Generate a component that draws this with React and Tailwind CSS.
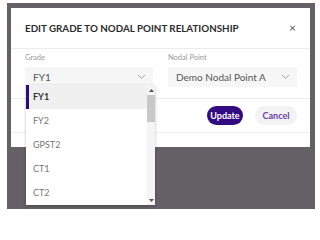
import React from "react";

const Chevron = () => (
  <svg width="9" height="6" viewBox="0 0 9 6" fill="none">
    <path d="M1 1l3.5 3.5L8 1" stroke="#9a9a9a" strokeWidth="0.9" />
  </svg>
);

export default function App() {
  const items = ["FY1", "FY2", "GPST2", "CT1", "CT2"];
  return (
    <div
      className="w-[319px] h-[214px] bg-white pt-[3px] pl-[7px] overflow-hidden"
      style={{ fontFamily: "Lato, 'Open Sans', sans-serif" }}
    >
      <div className="relative w-[308px] h-[206px] bg-[#636165] pt-[5px] pl-[4px]">
        <div className="w-[299px] h-[139px] bg-white flex flex-col">
          <div className="h-[41px] flex items-center justify-between pl-[14px] pr-[14px] border-b border-[#ececec]">
            <span className="text-[9.8px] font-bold text-[#2b2b2b]">
              EDIT GRADE TO NODAL POINT RELATIONSHIP
            </span>
            <span className="text-[12px] text-[#555] leading-none mt-[-1px]">×</span>
          </div>
          <div className="h-[50px] pl-[14px] pr-[13px] pt-[3px] flex gap-[15px] border-b border-[#ececec]">
            <div className="flex flex-col w-[128px]">
              <span className="text-[7.5px] text-[#9a9a9a] leading-[11px]">Grade</span>
              <div className="mt-[4px] h-[20px] bg-[#f6f6f6] flex items-center justify-between pl-[8px] pr-[7px]">
                <span className="text-[10px] text-[#555]">FY1</span>
                <Chevron />
              </div>
            </div>
            <div className="flex flex-col w-[129px]">
              <span className="text-[7.5px] text-[#9a9a9a] leading-[11px]">Nodal Point</span>
              <div className="mt-[4px] h-[20px] bg-[#f6f6f6] flex items-center justify-between pl-[8px] pr-[7px]">
                <span className="text-[10px] text-[#555]">Demo Nodal Point A</span>
                <Chevron />
              </div>
            </div>
          </div>
          <div className="h-[34px] flex items-start justify-end gap-[12px] pr-[13px] pt-[7px] border-b border-[#f0f0f0]">
            <button className="h-[19px] w-[36px] rounded-full bg-[#340a82] text-white text-[9px] font-bold flex items-center justify-center">
              Update
            </button>
            <button className="h-[19px] w-[42px] rounded-full bg-[#f3f3f3] text-[#6a3fb0] text-[9px] font-bold flex items-center justify-center">
              Cancel
            </button>
          </div>
        </div>

        <div className="absolute left-[19px] top-[82px] w-[129px] h-[120px] bg-white shadow-[0_1px_3px_rgba(0,0,0,0.25)] flex overflow-hidden">
          <div className="flex-1 flex flex-col">
            {items.map((it, i) => (
              <div
                key={it}
                className={
                  i === 0
                    ? "h-[24px] flex items-center pl-[4px] bg-[#f0f0f0] border-l-[3px] border-[#2d0a7a] text-[9px] font-bold text-[#333]"
                    : "h-[24px] flex items-center pl-[7px] text-[9px] text-[#777]"
                }
              >
                {it}
              </div>
            ))}
          </div>
          <div className="w-[8px] bg-[#f4f4f4] flex flex-col items-center">
            <div className="h-[10px] flex items-center justify-center">
              <svg width="5" height="3" viewBox="0 0 5 3"><path d="M0 3L2.5 0L5 3z" fill="#555" /></svg>
            </div>
            <div className="w-[8px] h-[27px] bg-[#c8c8c8]" />
            <div className="flex-1" />
            <div className="h-[10px] flex items-center justify-center">
              <svg width="5" height="3" viewBox="0 0 5 3"><path d="M0 0L2.5 3L5 0z" fill="#555" /></svg>
            </div>
          </div>
        </div>
      </div>
    </div>
  );
}
